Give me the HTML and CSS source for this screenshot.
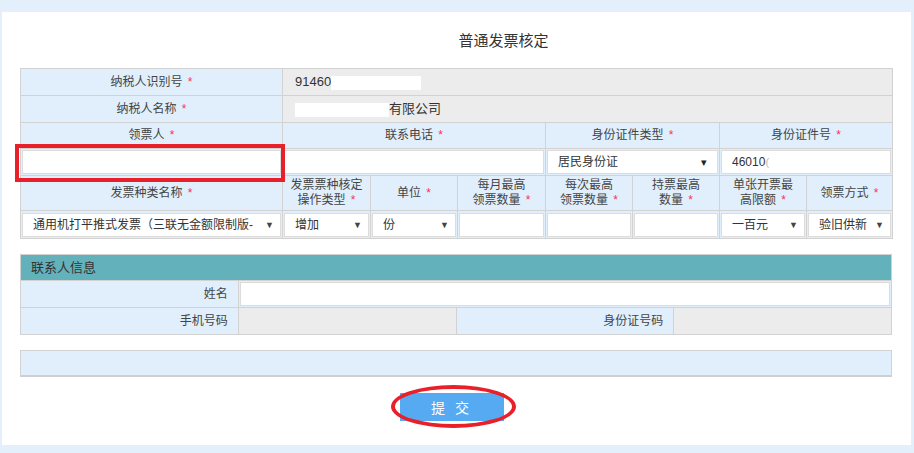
FILE: index.html
```html
<!DOCTYPE html>
<html lang="zh-CN">

<head>
    <meta charset="UTF-8">
    <title>普通发票核定</title>
    <link rel="stylesheet" href="styles.css">
</head>

<body>
    <div class="panel">
        <div class="page-title">普通发票核定</div>

        <!-- 核定信息 -->
        <table class="form-table">
            <colgroup>
                <col style="width: 262px">
                <col style="width: 88px">
                <col style="width: 87px">
                <col style="width: 88px">
                <col style="width: 87px">
                <col style="width: 87px">
                <col style="width: 87px">
                <col style="width: 86px">
            </colgroup>
            <tr class="row-27">
                <td class="label">纳税人识别号 <i>*</i></td>
                <td class="readonly" colspan="7">91460<span class="mask mask-a"></span></td>
            </tr>
            <tr class="row-27">
                <td class="label">纳税人名称 <i>*</i></td>
                <td class="readonly" colspan="7"><span class="mask mask-b"></span>有限公司</td>
            </tr>
            <tr class="row-26">
                <td class="label">领票人 <i>*</i></td>
                <td class="label" colspan="3">联系电话 <i>*</i></td>
                <td class="label" colspan="2">身份证件类型 <i>*</i></td>
                <td class="label" colspan="2">身份证件号 <i>*</i></td>
            </tr>
            <tr class="row-27">
                <td class="field">
                    <div class="mark-wrap">
                        <div class="input"></div>
                        <span class="red-box"></span>
                    </div>
                </td>
                <td class="field" colspan="3"><div class="input"></div></td>
                <td class="field" colspan="2"><div class="input select caret">居民身份证<span class="arrow-small">&#9662;</span></div></td>
                <td class="field" colspan="2"><div class="input">46010<span class="cut">(</span></div></td>
            </tr>
            <tr class="row-35">
                <td class="label">发票种类名称 <i>*</i></td>
                <td class="label">发票票种核定<br>操作类型 <i>*</i></td>
                <td class="label">单位 <i>*</i></td>
                <td class="label">每月最高<br>领票数量 <i>*</i></td>
                <td class="label">每次最高<br>领票数量 <i>*</i></td>
                <td class="label">持票最高<br>数量 <i>*</i></td>
                <td class="label">单张开票最<br>高限额 <i>*</i></td>
                <td class="label">领票方式 <i>*</i></td>
            </tr>
            <tr class="row-28">
                <td class="field"><div class="input select"><span class="clip">通用机打平推式发票（三联无金额限制版-</span><span class="arrow">&#9660;</span></div></td>
                <td class="field"><div class="input select">增加<span class="arrow">&#9660;</span></div></td>
                <td class="field"><div class="input select">份<span class="arrow">&#9660;</span></div></td>
                <td class="field"><div class="input"></div></td>
                <td class="field"><div class="input"></div></td>
                <td class="field"><div class="input"></div></td>
                <td class="field"><div class="input select">一百元<span class="arrow">&#9660;</span></div></td>
                <td class="field"><div class="input select"><span class="clip">验旧供新</span><span class="arrow">&#9660;</span></div></td>
            </tr>
        </table>

        <!-- 联系人信息 -->
        <table class="form-table contact">
            <tr class="row-26">
                <td class="section-head" colspan="4">联系人信息</td>
            </tr>
            <tr class="row-27">
                <td class="label right">姓名</td>
                <td class="field" colspan="3"><div class="input"></div></td>
            </tr>
            <tr class="row-27">
                <td class="label right">手机号码</td>
                <td class="readonly"></td>
                <td class="label right">身份证号码</td>
                <td class="readonly"></td>
            </tr>
        </table>

        <div class="blank-bar"></div>

        <div class="actions">
            <div class="btn-wrap">
                <button class="btn-submit">提 交</button>
                <span class="red-ring"></span>
            </div>
        </div>
    </div>
</body>

</html>
```

FILE: styles.css
```css
/* Global Reset */
* {
    margin: 0;
    padding: 0;
    box-sizing: border-box;
}

body {
    background: #e3f0fc;
    font-family: "Liberation Sans", "Noto Sans CJK SC", sans-serif;
    font-size: 12px;
    color: #333;
}

/* Main Panel */
.panel {
    width: 909px;
    height: 433px;
    margin: 12px 0 0 2px;
    padding: 0 18px;
    background: #fff;
}

.page-title {
    padding: 18px 0 0 94px;
    height: 56px;
    line-height: 22px;
    font-size: 15px;
    text-align: center;
    color: #333;
}

/* Form Tables */
.form-table {
    width: 872px;
    border-collapse: collapse;
    table-layout: fixed;
}

.form-table td {
    border: 1px solid #d2d2d2;
    text-align: center;
    vertical-align: middle;
    line-height: 15px;
}

.row-26 { height: 26px; }
.row-27 { height: 27px; }
.row-28 { height: 28px; }
.row-35 { height: 35px; }

.label {
    background: #e1effc;
    color: #444;
}

.label i {
    font-style: normal;
    color: #f2365a;
    margin-left: 2px;
}

.label.right {
    text-align: right !important;
    padding-right: 10px;
}

.readonly {
    background: #ececec;
    text-align: left !important;
    padding-left: 12px;
    font-size: 13px;
    color: #333;
}

.mask {
    display: inline-block;
    height: 14px;
    background: #fff;
    vertical-align: middle;
}

.mask-a { width: 90px; }
.mask-b { width: 94px; }

.field {
    background: #e1effc;
    padding: 1px;
}

.input {
    height: 24px;
    background: #fff;
    border: 1px solid #dcdcdc;
    text-align: left;
    padding: 0 10px;
    line-height: 22px;
    font-size: 12px;
    color: #333;
    white-space: nowrap;
    overflow: hidden;
}

.select {
    display: flex;
    justify-content: space-between;
    align-items: center;
    padding: 0 6px 0 10px;
}

.select .clip {
    overflow: hidden;
    white-space: nowrap;
    margin-right: 4px;
}

.arrow {
    font-size: 9px;
    color: #444;
    flex: none;
}

.caret {
    padding-right: 10px;
}

.arrow-small {
    font-size: 11px;
    color: #222;
}

.cut {
    color: #bbb;
    font-size: 11px;
}

/* Highlights */
.mark-wrap {
    position: relative;
}

.red-box {
    position: absolute;
    left: -7px;
    top: -6px;
    width: 270px;
    height: 38px;
    border: 4px solid #e8202a;
}

/* Contact Section */
.contact {
    margin-top: 15px;
}

.section-head {
    background: #63b1ba;
    color: #333;
    font-size: 13px;
    text-align: left !important;
    padding-left: 10px;
}

.blank-bar {
    width: 872px;
    height: 27px;
    margin-top: 15px;
    background: #e1effc;
    border: 1px solid #d2d2d2;
    border-bottom: 2px solid #cfcfcf;
}

/* Submit Button */
.actions {
    display: flex;
    justify-content: center;
    padding-top: 16px;
    padding-right: 10px;
}

.btn-wrap {
    position: relative;
}

.btn-submit {
    width: 104px;
    height: 28px;
    border: none;
    background: #55aaf2;
    color: #fff;
    font-family: "Liberation Sans", "Noto Sans CJK SC", sans-serif;
    font-size: 14px;
    letter-spacing: 3px;
}

.red-ring {
    position: absolute;
    left: -9px;
    top: -8px;
    width: 125px;
    height: 43px;
    border: 4px solid #e8202a;
    border-radius: 50%;
}
```
